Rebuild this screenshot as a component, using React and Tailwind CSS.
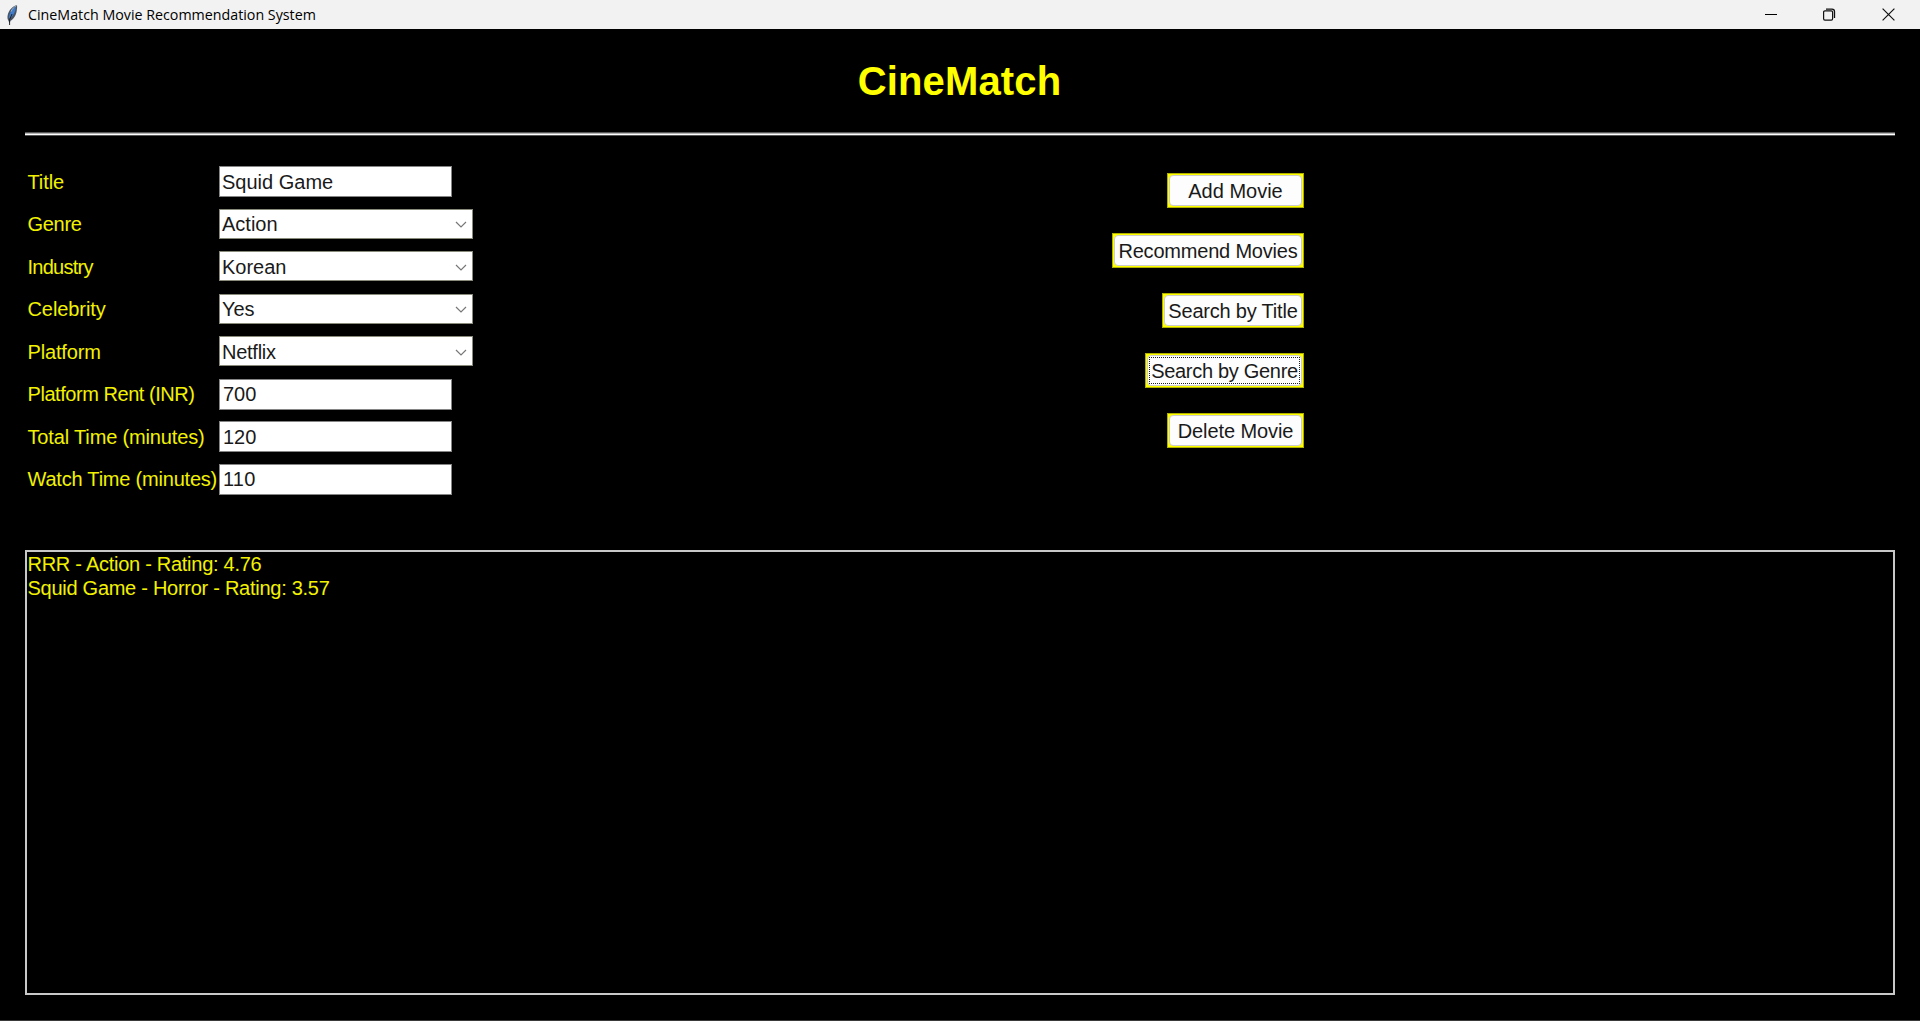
const fields = [
  { label: "Title", value: "Squid Game", ls: "leading-[32px] tracking-[-0.1px]", vs: "pl-[2px] leading-[30px]" },
  { label: "Genre", value: "Action", combo: true, ls: "leading-[31px] tracking-[-0.3px]", vs: "pt-px" },
  { label: "Industry", value: "Korean", combo: true, ls: "leading-[32px] tracking-[-0.75px]", vs: "pt-[2px]" },
  { label: "Celebrity", value: "Yes", combo: true, ls: "leading-[31px] tracking-[-0.08px]", vs: "pt-px tracking-[-0.1px]" },
  { label: "Platform", value: "Netflix", combo: true, ls: "leading-[32px] tracking-[-0.15px]", vs: "pt-[2px] tracking-[-0.25px]" },
  { label: "Platform Rent (INR)", value: "700", ls: "leading-[31px] tracking-[-0.45px]", vs: "pl-[3px] leading-[29px]" },
  { label: "Total Time (minutes)", value: "120", ls: "leading-[32px] tracking-[-0.15px]", vs: "pl-[3px] leading-[30px]" },
  { label: "Watch Time (minutes)", value: "110", ls: "leading-[31px] tracking-[-0.21px]", vs: "pl-[3px] leading-[29px] tracking-[0.2px]" },
];

const actions = [
  { text: "Add Movie", w: "w-[137px]", ls: "tracking-[0px]" },
  { text: "Recommend Movies", w: "w-[192px]", ls: "tracking-[-0.2px]" },
  { text: "Search by Title", w: "w-[142px]", ls: "tracking-[-0.2px]" },
  { text: "Search by Genre", w: "w-[159px]", ls: "tracking-[-0.3px]", focused: true },
  { text: "Delete Movie", w: "w-[137px]", ls: "tracking-[-0.1px]" },
];

function Feather() {
  return (
    <svg className="ml-[5px] h-6 w-[14px]" viewBox="0 0 14 24">
      <path d="M12 2.200C8 2.600 3.800 7 2.700 12c-.5 2.600-.2 4.600.9 6L4.500 20.500l1-2.700C8.500 16.500 11 12.500 11.700 8c.3-2.300.6-4.100.3-5.800Z" fill="#4a5462" />
      <path d="M10.900 3.800C7.500 5.300 4.600 9 4 14l.6 1.700C8.600 12.500 10.700 8.700 10.900 3.800Z" fill="#3f7cc9" />
      <path d="M11.400 2.800C9 3.700 7.200 5.900 6 8.700" stroke="#9fb6cf" fill="none" />
      <path d="M4.600 22V16.500L7 11" stroke="#111820" strokeWidth=".9" fill="none" />
    </svg>
  );
}

function TitleBar() {
  return (
    <header className="flex h-[29px] shrink-0 items-center bg-[#f2f2f2]">
      <Feather />
      <span className="ml-[9px] grow font-['Open_Sans',sans-serif] text-[14.25px] leading-[29px] text-black">
        CineMatch Movie Recommendation System
      </span>
      <svg className="mr-[46px] h-3 w-3" viewBox="0 0 12 12">
        <path d="M0 5.500h12" stroke="#000" />
      </svg>
      <svg className="mr-[46px] h-[13px] w-[13px]" viewBox="0 0 13 13" fill="none" stroke="#111">
        <path d="M3 1.200h6q2.500 0 2.500 2.500v6.200" strokeWidth="1.300" />
        <rect x=".6" y="2.900" width="9" height="9.200" rx="1.300" strokeWidth="1.200" fill="#f2f2f2" />
      </svg>
      <svg className="mr-[25px] h-[13px] w-[13px]" viewBox="0 0 13 13">
        <path d="M.6.600l11.800 11.800M12.400.600.6 12.400" stroke="#111" strokeWidth="1.200" />
      </svg>
    </header>
  );
}

function Field({ label, value, combo, ls, vs }) {
  return (
    <div className="flex h-[42.5px] items-start">
      <div className={"w-[192px] whitespace-nowrap pl-[0.5px] text-[#f2f200] " + ls}>{label}</div>
      {combo ? (
        <div className="flex h-[30px] w-[254px] items-center border border-[#8a8a7a] bg-white pl-[2px] pr-[5px] text-[#1a1a1a]">
          <span className={"grow leading-[29px] " + vs}>{value}</span>
          <svg className="mt-0.5 h-[7px] w-3" viewBox="0 0 12 7">
            <path d="M1 1l5 5 5-5" fill="none" stroke="#777" strokeWidth="1.200" />
          </svg>
        </div>
      ) : (
        <div className={"h-[31px] w-[233px] border border-[#858585] bg-white text-[#1a1a1a] " + vs}>{value}</div>
      )}
    </div>
  );
}

function Action({ text, w, ls, focused }) {
  return (
    <button className={"h-[35px] border border-[#b0b000] bg-[#ffff00] p-px " + w}>
      <span className="flex h-full items-center justify-center rounded-[4px] border border-[#cccccc] bg-[#fdfdfd] p-px">
        <span
          className={
            "flex h-full w-full items-center justify-center whitespace-nowrap border border-dotted text-[#1a1a1a] " +
            (focused ? "border-[#222] " : "border-transparent ") + ls
          }
        >
          {text}
        </span>
      </span>
    </button>
  );
}

export default function App() {
  return (
    <div className="flex h-[1021px] w-[1920px] flex-col overflow-hidden border-b border-[#3a3a3a] bg-black font-['Liberation_Sans',Arial,sans-serif] text-[20px]">
      <TitleBar />
      <main className="flex grow flex-col px-[25px] pb-[25px]">
        <h1 className="h-[103px] pr-px text-center text-[40px] leading-[104px] font-bold tracking-[0.15px] text-[#ffff00]">CineMatch</h1>
        <div className="h-1 shrink-0 border-y border-[#555] bg-white">
          <div className="h-px bg-[#b4b4b4]" />
        </div>
        <div className="flex h-[414px] shrink-0 pt-[30px]">
          <section className="w-[460px] pl-[2px]">
            {fields.map((f) => (
              <Field key={f.label} {...f} />
            ))}
          </section>
          <section className="flex w-[819px] flex-col items-end gap-[25px] pt-[7px]">
            {actions.map((a) => (
              <Action key={a.text} {...a} />
            ))}
          </section>
        </div>
        <ul className="grow border-2 border-[#c8c8c8] pl-[0.5px] leading-6 text-[#f2f200]">
          <li className="tracking-[-0.27px]">RRR - Action - Rating: 4.76</li>
          <li className="tracking-[-0.27px]">Squid Game - Horror - Rating: 3.57</li>
        </ul>
      </main>
    </div>
  );
}
